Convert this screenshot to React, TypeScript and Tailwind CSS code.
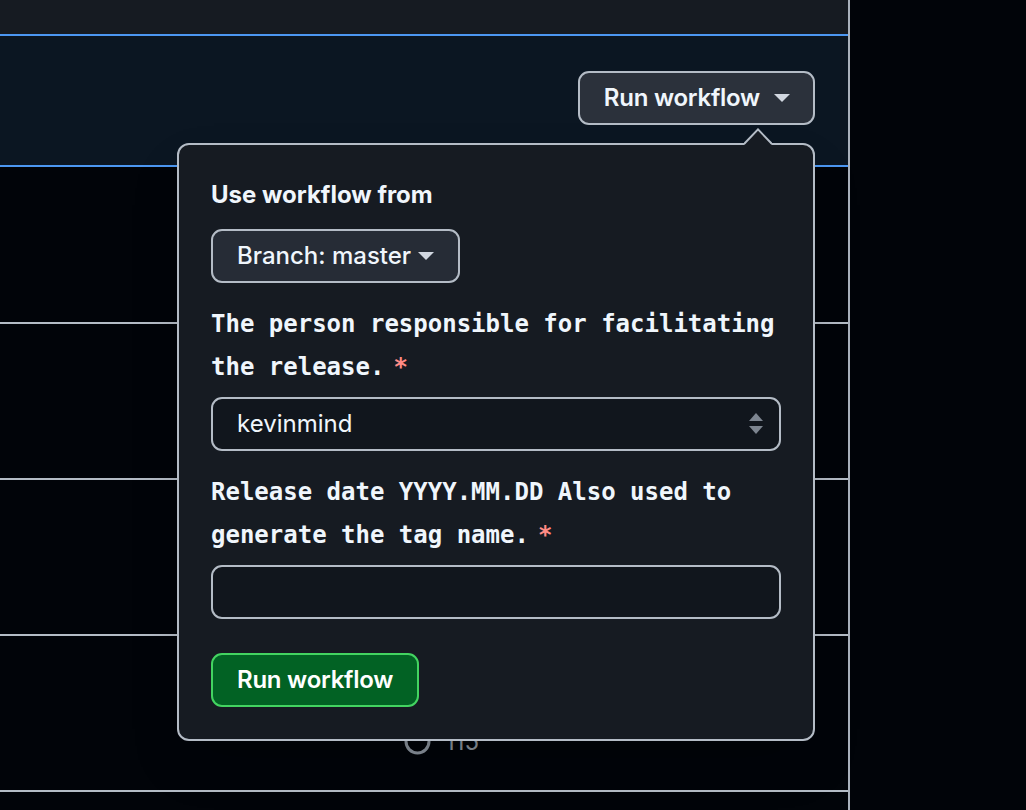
import { useState } from "react";

const sans = "font-['Inter','Noto_Sans',sans-serif]";
const mono = "font-['DejaVu_Sans_Mono','Liberation_Mono',monospace]";

const Caret = () => (
  <svg width="16" height="8" viewBox="0 0 16 8" className="shrink-0">
    <path d="M0 0h16L8 8z" fill="#d1d7e0" />
  </svg>
);

const Row = ({ children }: { children?: React.ReactNode }) => (
  <div className="h-[156px] border-b-2 border-[#b4bcc6]">{children}</div>
);

const Label = ({ children }: { children: React.ReactNode }) => (
  <label className={`${mono} block text-[24px] leading-[43px] font-bold text-[#f0f6fc]`}>
    <span>{children}</span>
    <span className="ml-[9px] text-[#ff8b85]">*</span>
  </label>
);

const WorkflowPopover = () => {
  const [who, setWho] = useState("kevinmind");
  const [date, setDate] = useState("");
  return (
    <div className={`${sans} absolute left-[177px] top-[143px] w-[638px] rounded-[12px] border-2 border-[#b4bcc6] bg-[#161b22] px-[32px] pt-[32px] pb-[32px] shadow-2xl`}>
      <svg width="28" height="17" viewBox="0 0 28 17" className="absolute left-[565px] top-[-17px]">
        <polygon points="0,17 14,1 28,17" fill="#161b22" />
        <polyline points="0,16 14,1.4 28,16" fill="none" stroke="#b4bcc6" strokeWidth="2" />
      </svg>
      <div className="text-[24px] leading-[36px] font-bold text-[#f0f6fc]">Use workflow from</div>
      <button className="mt-[16px] flex h-[54px] items-center gap-[7px] rounded-[11px] border-2 border-[#b4bcc6] bg-[#262c36] pl-[24px] pr-[24px] text-[24px] font-medium text-[#f0f6fc]">
        Branch: master
        <Caret />
      </button>
      <div className="mt-[20px]">
        <Label>The person responsible for facilitating the release.</Label>
      </div>
      <div className="relative mt-[8px]">
        <select
          value={who}
          onChange={(e) => setWho(e.target.value)}
          className="h-[54px] w-full appearance-none rounded-[11px] border-2 border-[#b4bcc6] bg-[#11161d] pl-[24px] text-[24px] text-[#f0f6fc] outline-none"
        >
          <option>kevinmind</option>
        </select>
        <svg width="14" height="22" viewBox="0 0 14 22" className="pointer-events-none absolute right-[18px] top-[16px]">
          <path d="M7 0l7 8H0z M0 13h14l-7 8z" fill="#7d8590" />
        </svg>
      </div>
      <div className="mt-[20px]">
        <Label>Release date YYYY.MM.DD Also used to generate the tag name.</Label>
      </div>
      <input
        value={date}
        onChange={(e) => setDate(e.target.value)}
        className="mt-[8px] block h-[54px] w-full rounded-[11px] border-2 border-[#b4bcc6] bg-[#11161d] px-[24px] text-[24px] text-[#f0f6fc] outline-none"
      />
      <button className="mt-[34px] flex h-[54px] items-center rounded-[11px] border-2 border-[#43d461] bg-[#026224] px-[24px] text-[24px] font-semibold tracking-[-0.01em] text-white">
        Run workflow
      </button>
    </div>
  );
};

export default function App() {
  return (
    <div className={`${sans} relative flex min-h-[810px] bg-[#010409]`}>
      <div className="w-[850px] shrink-0 border-r-2 border-[#a9b1bc]">
        <div className="h-[34px] bg-[#161b22]" />
        <div className="flex h-[133px] items-start justify-end border-y-2 border-[#4c97f2] bg-[#0b1622] pr-[33px] pt-[35px]">
          <button className="flex h-[54px] items-center gap-[14px] rounded-[11px] border-2 border-[#b4bcc6] bg-[#2b313b] pl-[24px] pr-[23px] text-[24px] font-semibold tracking-[-0.01em] text-[#f0f6fc]">
            Run workflow
            <Caret />
          </button>
        </div>
        <div className="h-[157px] border-b-2 border-[#b4bcc6]" />
        <Row />
        <Row />
        <Row>
          <div className="flex items-center gap-[14px] pl-[404px] pt-[92px] text-[24px] leading-[26px] text-[#8b949e]">
            <svg width="27" height="27" viewBox="0 0 27 27">
              <circle cx="13.5" cy="13.5" r="11.5" fill="none" stroke="#8b949e" strokeWidth="3" />
            </svg>
            <span>115</span>
          </div>
        </Row>
      </div>
      <div className="flex-1" />
      <WorkflowPopover />
    </div>
  );
}
